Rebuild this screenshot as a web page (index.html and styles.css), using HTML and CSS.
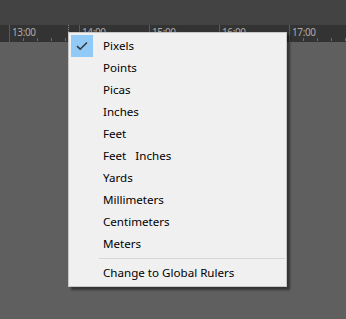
FILE: index.html
```html
<!DOCTYPE html>
<html lang="en">
<head>
    <meta charset="UTF-8">
    <title>Ruler Units</title>
    <link rel="stylesheet" href="styles.css">
</head>
<body>
    <div class="topbar"></div>
    <div class="ruler">
        <div class="seg first"></div>
        <div class="seg"><span>13:00</span></div>
        <div class="seg"><span>14:00</span></div>
        <div class="seg"><span>15:00</span></div>
        <div class="seg"><span>16:00</span></div>
        <div class="seg"><span>17:00</span></div>
        <div class="marker"></div>
    </div>
    <div class="canvas"></div>

    <div class="menu">
        <div class="item checked">
            <span class="check">
                <svg width="12" height="10" viewBox="0 0 12 10"><path d="M1 5.2 L4.2 8.2 L11 1.5" fill="none" stroke="#3a3a3a" stroke-width="1.6"/></svg>
            </span>
            <span class="label">Pixels</span>
        </div>
        <div class="item"><span class="check"></span><span class="label">Points</span></div>
        <div class="item"><span class="check"></span><span class="label">Picas</span></div>
        <div class="item"><span class="check"></span><span class="label">Inches</span></div>
        <div class="item"><span class="check"></span><span class="label">Feet</span></div>
        <div class="item"><span class="check"></span><span class="label">Feet&nbsp;&nbsp;&nbsp;Inches</span></div>
        <div class="item"><span class="check"></span><span class="label">Yards</span></div>
        <div class="item"><span class="check"></span><span class="label">Millimeters</span></div>
        <div class="item"><span class="check"></span><span class="label">Centimeters</span></div>
        <div class="item"><span class="check"></span><span class="label">Meters</span></div>
        <div class="sep"></div>
        <div class="item"><span class="check"></span><span class="label">Change to Global Rulers</span></div>
    </div>
</body>
</html>
```

FILE: styles.css
```css
body {
    margin: 0;
    width: 346px;
    height: 319px;
    overflow: hidden;
    background: #5f5f5f;
    font-family: "Noto Sans", sans-serif;
    position: relative;
}
.topbar {
    height: 25px;
    background: #434343;
}
.ruler {
    height: 17px;
    background: #333333;
    display: flex;
    position: relative;
}
.seg {
    width: 69px;
    flex: none;
    border-left: 1px solid #5a5a5a;
    background: repeating-linear-gradient(to right, transparent 0, transparent 13px, #6a6a6a 13px, #6a6a6a 14px) bottom left / 100% 3px no-repeat;
    background-position: 0 13px;
}
.seg.first {
    width: 9px;
    border-left: none;
    background: none;
}
.seg span {
    display: block;
    padding: 2px 0 0 2px;
    font-size: 10px;
    line-height: 11px;
    color: #ababab;
    letter-spacing: -0.4px;
}
.marker {
    position: absolute;
    left: 68px;
    top: 0;
    height: 7px;
    border-left: 1px dotted #8a8a8a;
}
.canvas {
    height: 277px;
}
.menu {
    position: absolute;
    left: 68px;
    top: 32px;
    width: 217px;
    padding: 2px 0 2px 0;
    background: #f0f0f0;
    border: 1px solid #c8c8c8;
    box-shadow: 3px 3px 2px rgba(0, 0, 0, 0.45);
}
.item {
    display: flex;
    align-items: center;
    height: 22px;
}
.check {
    width: 22px;
    height: 22px;
    margin: 0 10px 0 2px;
    display: flex;
    align-items: center;
    justify-content: center;
}
.checked .check {
    background: #91c9f7;
}
.label {
    font-size: 11.6px;
    color: #000;
    margin-top: -2px;
}
.sep {
    height: 1px;
    background: #d7d7d7;
    margin: 3px 1px 3px 30px;
}
```
